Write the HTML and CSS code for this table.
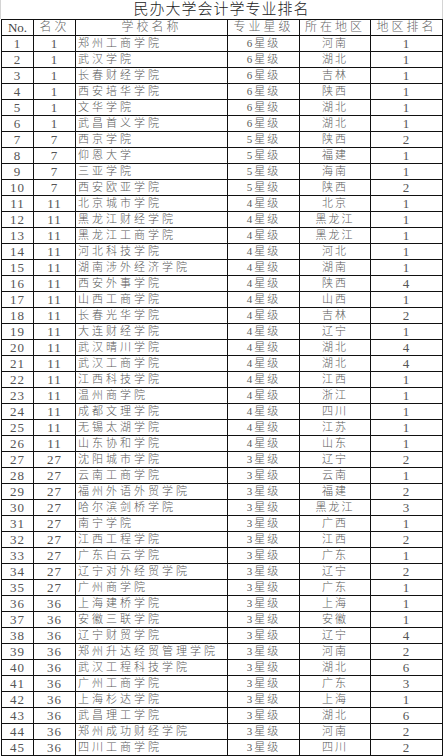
FILE: index.html
```html
<!DOCTYPE html>
<html lang="zh-CN">
<head>
<meta charset="utf-8">
<title>民办大学会计学专业排名</title>
<link rel="stylesheet" href="styles.css">
</head>
<body>
<div class="sheet">
  <div class="title">民办大学会计学专业排名</div>
  <div class="table">
    <div class="row head"><div class="c num">No.</div><div class="c">名次</div><div class="c">学校名称</div><div class="c">专业星级</div><div class="c">所在地区</div><div class="c">地区排名</div></div>
    <div class="row"><div class="c num">1</div><div class="c num">1</div><div class="c name">郑州工商学院</div><div class="c">6星级</div><div class="c">河南</div><div class="c num">1</div></div>
    <div class="row"><div class="c num">2</div><div class="c num">1</div><div class="c name">武汉学院</div><div class="c">6星级</div><div class="c">湖北</div><div class="c num">1</div></div>
    <div class="row"><div class="c num">3</div><div class="c num">1</div><div class="c name">长春财经学院</div><div class="c">6星级</div><div class="c">吉林</div><div class="c num">1</div></div>
    <div class="row"><div class="c num">4</div><div class="c num">1</div><div class="c name">西安培华学院</div><div class="c">6星级</div><div class="c">陕西</div><div class="c num">1</div></div>
    <div class="row"><div class="c num">5</div><div class="c num">1</div><div class="c name">文华学院</div><div class="c">6星级</div><div class="c">湖北</div><div class="c num">1</div></div>
    <div class="row"><div class="c num">6</div><div class="c num">1</div><div class="c name">武昌首义学院</div><div class="c">6星级</div><div class="c">湖北</div><div class="c num">1</div></div>
    <div class="row"><div class="c num">7</div><div class="c num">7</div><div class="c name">西京学院</div><div class="c">5星级</div><div class="c">陕西</div><div class="c num">2</div></div>
    <div class="row"><div class="c num">8</div><div class="c num">7</div><div class="c name">仰恩大学</div><div class="c">5星级</div><div class="c">福建</div><div class="c num">1</div></div>
    <div class="row"><div class="c num">9</div><div class="c num">7</div><div class="c name">三亚学院</div><div class="c">5星级</div><div class="c">海南</div><div class="c num">1</div></div>
    <div class="row"><div class="c num">10</div><div class="c num">7</div><div class="c name">西安欧亚学院</div><div class="c">5星级</div><div class="c">陕西</div><div class="c num">2</div></div>
    <div class="row"><div class="c num">11</div><div class="c num">11</div><div class="c name">北京城市学院</div><div class="c">4星级</div><div class="c">北京</div><div class="c num">1</div></div>
    <div class="row"><div class="c num">12</div><div class="c num">11</div><div class="c name">黑龙江财经学院</div><div class="c">4星级</div><div class="c">黑龙江</div><div class="c num">1</div></div>
    <div class="row"><div class="c num">13</div><div class="c num">11</div><div class="c name">黑龙江工商学院</div><div class="c">4星级</div><div class="c">黑龙江</div><div class="c num">1</div></div>
    <div class="row"><div class="c num">14</div><div class="c num">11</div><div class="c name">河北科技学院</div><div class="c">4星级</div><div class="c">河北</div><div class="c num">1</div></div>
    <div class="row"><div class="c num">15</div><div class="c num">11</div><div class="c name">湖南涉外经济学院</div><div class="c">4星级</div><div class="c">湖南</div><div class="c num">1</div></div>
    <div class="row"><div class="c num">16</div><div class="c num">11</div><div class="c name">西安外事学院</div><div class="c">4星级</div><div class="c">陕西</div><div class="c num">4</div></div>
    <div class="row"><div class="c num">17</div><div class="c num">11</div><div class="c name">山西工商学院</div><div class="c">4星级</div><div class="c">山西</div><div class="c num">1</div></div>
    <div class="row"><div class="c num">18</div><div class="c num">11</div><div class="c name">长春光华学院</div><div class="c">4星级</div><div class="c">吉林</div><div class="c num">2</div></div>
    <div class="row"><div class="c num">19</div><div class="c num">11</div><div class="c name">大连财经学院</div><div class="c">4星级</div><div class="c">辽宁</div><div class="c num">1</div></div>
    <div class="row"><div class="c num">20</div><div class="c num">11</div><div class="c name">武汉晴川学院</div><div class="c">4星级</div><div class="c">湖北</div><div class="c num">4</div></div>
    <div class="row"><div class="c num">21</div><div class="c num">11</div><div class="c name">武汉工商学院</div><div class="c">4星级</div><div class="c">湖北</div><div class="c num">4</div></div>
    <div class="row"><div class="c num">22</div><div class="c num">11</div><div class="c name">江西科技学院</div><div class="c">4星级</div><div class="c">江西</div><div class="c num">1</div></div>
    <div class="row"><div class="c num">23</div><div class="c num">11</div><div class="c name">温州商学院</div><div class="c">4星级</div><div class="c">浙江</div><div class="c num">1</div></div>
    <div class="row"><div class="c num">24</div><div class="c num">11</div><div class="c name">成都文理学院</div><div class="c">4星级</div><div class="c">四川</div><div class="c num">1</div></div>
    <div class="row"><div class="c num">25</div><div class="c num">11</div><div class="c name">无锡太湖学院</div><div class="c">4星级</div><div class="c">江苏</div><div class="c num">1</div></div>
    <div class="row"><div class="c num">26</div><div class="c num">11</div><div class="c name">山东协和学院</div><div class="c">4星级</div><div class="c">山东</div><div class="c num">1</div></div>
    <div class="row"><div class="c num">27</div><div class="c num">27</div><div class="c name">沈阳城市学院</div><div class="c">3星级</div><div class="c">辽宁</div><div class="c num">2</div></div>
    <div class="row"><div class="c num">28</div><div class="c num">27</div><div class="c name">云南工商学院</div><div class="c">3星级</div><div class="c">云南</div><div class="c num">1</div></div>
    <div class="row"><div class="c num">29</div><div class="c num">27</div><div class="c name">福州外语外贸学院</div><div class="c">3星级</div><div class="c">福建</div><div class="c num">2</div></div>
    <div class="row"><div class="c num">30</div><div class="c num">27</div><div class="c name">哈尔滨剑桥学院</div><div class="c">3星级</div><div class="c">黑龙江</div><div class="c num">3</div></div>
    <div class="row"><div class="c num">31</div><div class="c num">27</div><div class="c name">南宁学院</div><div class="c">3星级</div><div class="c">广西</div><div class="c num">1</div></div>
    <div class="row"><div class="c num">32</div><div class="c num">27</div><div class="c name">江西工程学院</div><div class="c">3星级</div><div class="c">江西</div><div class="c num">2</div></div>
    <div class="row"><div class="c num">33</div><div class="c num">27</div><div class="c name">广东白云学院</div><div class="c">3星级</div><div class="c">广东</div><div class="c num">1</div></div>
    <div class="row"><div class="c num">34</div><div class="c num">27</div><div class="c name">辽宁对外经贸学院</div><div class="c">3星级</div><div class="c">辽宁</div><div class="c num">2</div></div>
    <div class="row"><div class="c num">35</div><div class="c num">27</div><div class="c name">广州商学院</div><div class="c">3星级</div><div class="c">广东</div><div class="c num">1</div></div>
    <div class="row"><div class="c num">36</div><div class="c num">36</div><div class="c name">上海建桥学院</div><div class="c">3星级</div><div class="c">上海</div><div class="c num">1</div></div>
    <div class="row"><div class="c num">37</div><div class="c num">36</div><div class="c name">安徽三联学院</div><div class="c">3星级</div><div class="c">安徽</div><div class="c num">1</div></div>
    <div class="row"><div class="c num">38</div><div class="c num">36</div><div class="c name">辽宁财贸学院</div><div class="c">3星级</div><div class="c">辽宁</div><div class="c num">4</div></div>
    <div class="row"><div class="c num">39</div><div class="c num">36</div><div class="c name">郑州升达经贸管理学院</div><div class="c">3星级</div><div class="c">河南</div><div class="c num">2</div></div>
    <div class="row"><div class="c num">40</div><div class="c num">36</div><div class="c name">武汉工程科技学院</div><div class="c">3星级</div><div class="c">湖北</div><div class="c num">6</div></div>
    <div class="row"><div class="c num">41</div><div class="c num">36</div><div class="c name">广州工商学院</div><div class="c">3星级</div><div class="c">广东</div><div class="c num">3</div></div>
    <div class="row"><div class="c num">42</div><div class="c num">36</div><div class="c name">上海杉达学院</div><div class="c">3星级</div><div class="c">上海</div><div class="c num">1</div></div>
    <div class="row"><div class="c num">43</div><div class="c num">36</div><div class="c name">武昌理工学院</div><div class="c">3星级</div><div class="c">湖北</div><div class="c num">6</div></div>
    <div class="row"><div class="c num">44</div><div class="c num">36</div><div class="c name">郑州成功财经学院</div><div class="c">3星级</div><div class="c">河南</div><div class="c num">2</div></div>
    <div class="row"><div class="c num">45</div><div class="c num">36</div><div class="c name">四川工商学院</div><div class="c">3星级</div><div class="c">四川</div><div class="c num">2</div></div>
  </div>
</div>
</body>
</html>
```

FILE: styles.css
```css
html, body {
  margin: 0;
  padding: 0;
  background: #ffffff;
}

.sheet {
  width: 443px;
  font-family: "Liberation Serif", "Noto Sans CJK SC", serif;
  color: #4a4a4a;
}

.title {
  box-sizing: border-box;
  width: 443px;
  height: 19px;
  border-left: 1px solid #d4d4d4;
  border-right: 1px solid #d4d4d4;
  text-align: center;
  font-size: 15px;
  line-height: 19px;
  letter-spacing: 1px;
  color: #222222;
  font-weight: 300;
}

.table {
  margin-left: 1px;
  width: 442px;
  box-sizing: border-box;
  border-left: 1px solid #111;
  border-top: 1px solid #111;
  display: flex;
  flex-direction: column;
}

.row {
  display: grid;
  grid-template-columns: 32px 42px 152px 72px 71px 72px;
}

.c {
  box-sizing: border-box;
  height: 16px;
  border-right: 1px solid #111;
  border-bottom: 1px solid #111;
  text-align: center;
  font-size: 11px;
  line-height: 15px;
  letter-spacing: 2px;
  white-space: nowrap;
  overflow: hidden;
  font-weight: 300;
  color: #5a5a5a;
}

.c.num {
  font-size: 13px;
  letter-spacing: 1px;
  color: #555555;
  font-weight: 400;
}

.head .c {
  font-size: 12px;
  letter-spacing: 3px;
  color: #666666;
}

.head .c.num {
  font-size: 13px;
  letter-spacing: 0;
  color: #444444;
}

.c.name {
  text-align: left;
  padding-left: 2px;
  letter-spacing: 3px;
}
```
